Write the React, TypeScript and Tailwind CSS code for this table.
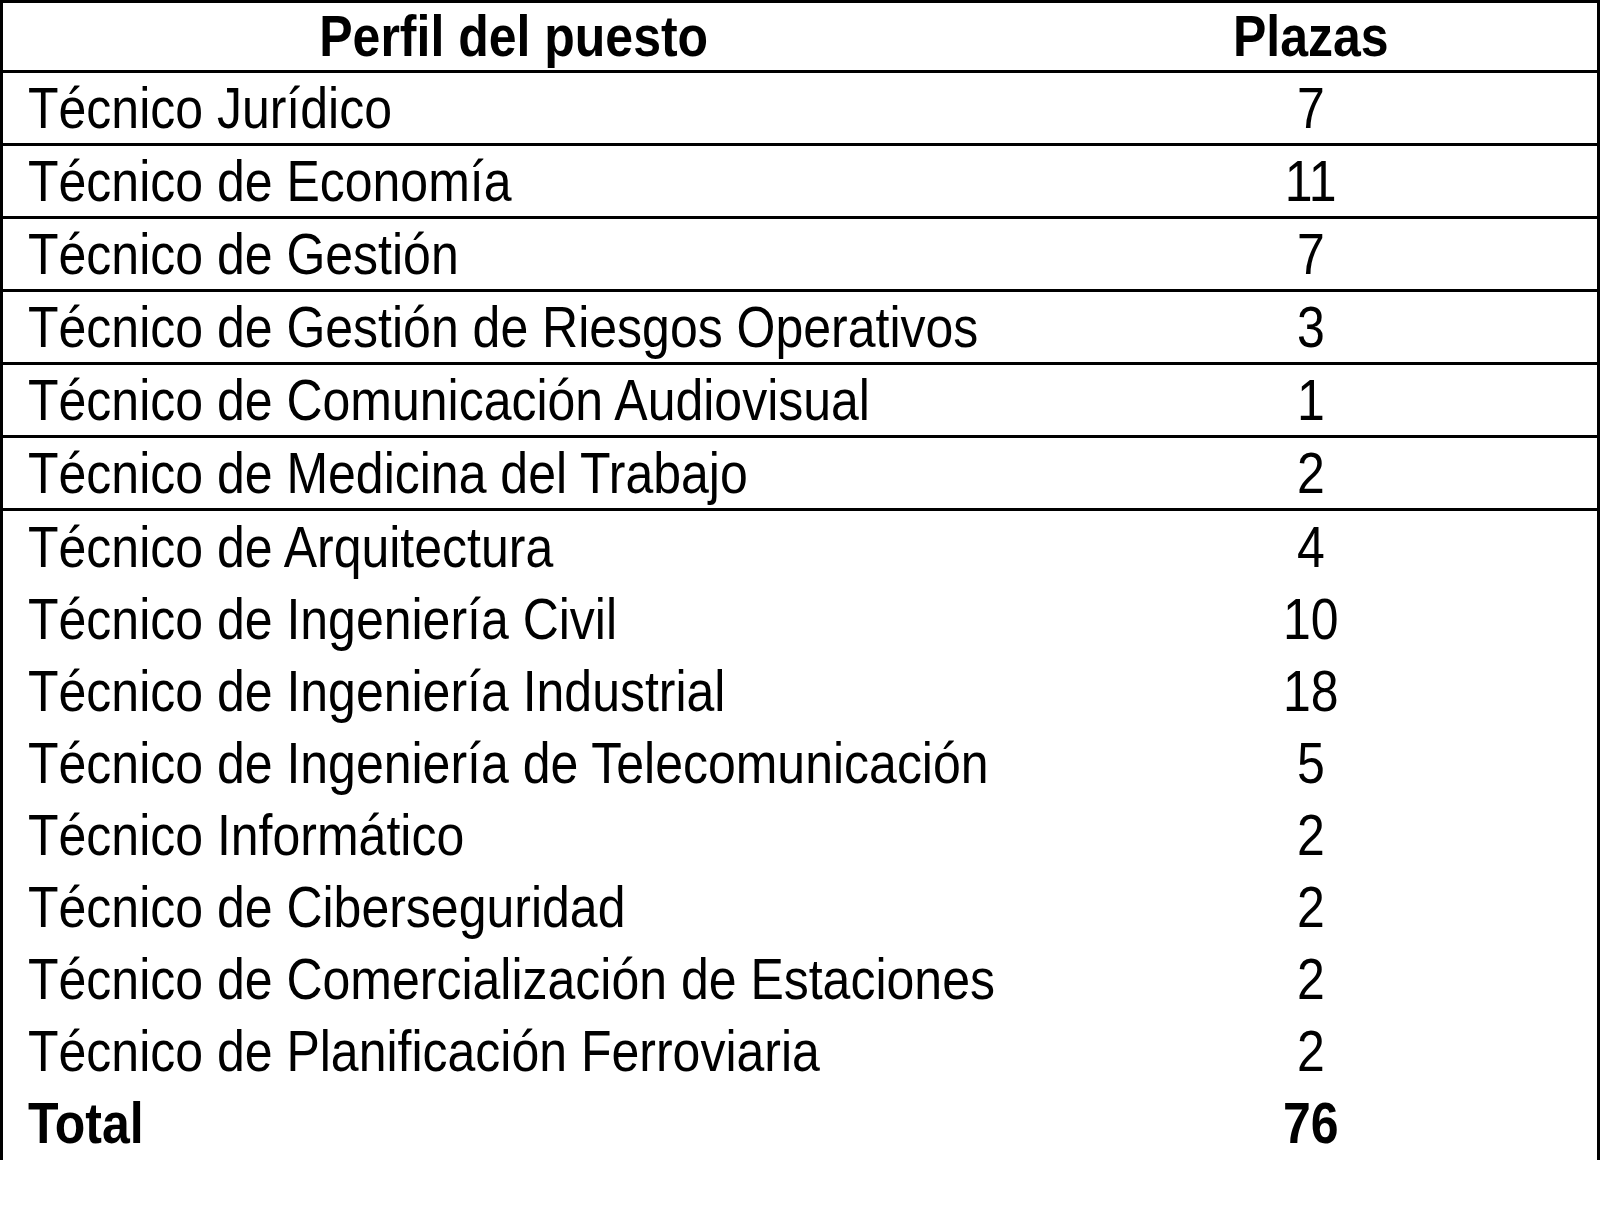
import React from "react";

const bordered: [string, string][] = [
  ["Técnico Jurídico", "7"],
  ["Técnico de Economía", "11"],
  ["Técnico de Gestión", "7"],
  ["Técnico de Gestión de Riesgos Operativos", "3"],
  ["Técnico de Comunicación Audiovisual", "1"],
  ["Técnico de Medicina del Trabajo", "2"],
];

const plain: [string, string][] = [
  ["Técnico de Arquitectura", "4"],
  ["Técnico de Ingeniería Civil", "10"],
  ["Técnico de Ingeniería Industrial", "18"],
  ["Técnico de Ingeniería de Telecomunicación", "5"],
  ["Técnico Informático", "2"],
  ["Técnico de Ciberseguridad", "2"],
  ["Técnico de Comercialización de Estaciones", "2"],
  ["Técnico de Planificación Ferroviaria", "2"],
];

function Name({ children }: { children: React.ReactNode }) {
  return (
    <div className="pl-[25px] whitespace-nowrap">
      <span className="inline-block origin-left scale-x-[0.877]">{children}</span>
    </div>
  );
}

function Num({ children }: { children: React.ReactNode }) {
  return (
    <div className="flex justify-center whitespace-nowrap">
      <span className="inline-block origin-center scale-x-[0.877]">{children}</span>
    </div>
  );
}

export default function App() {
  return (
    <div className="w-[1600px] h-[1232px] bg-white text-black font-['Liberation_Sans','Arial',sans-serif]">
      <div className="w-[1600px] h-[1160px] border-l-[3px] border-r-[3px] border-t-[3px] border-black">
        <div className="grid grid-cols-[1022px_1fr] h-[70px] border-b-[3px] border-black font-bold text-[57px] leading-[67px]">
          <Num>Perfil del puesto</Num>
          <Num>Plazas</Num>
        </div>
        {bordered.map(([name, n]) => (
          <div
            key={name}
            className="grid grid-cols-[1022px_1fr] h-[73px] border-b-[3px] border-black text-[57px] leading-[70px]"
          >
            <Name>{name}</Name>
            <Num>{n}</Num>
          </div>
        ))}
        {plain.map(([name, n]) => (
          <div key={name} className="grid grid-cols-[1022px_1fr] h-[72px] text-[57px] leading-[72px]">
            <Name>{name}</Name>
            <Num>{n}</Num>
          </div>
        ))}
        <div className="grid grid-cols-[1022px_1fr] h-[72px] text-[57px] leading-[72px] font-bold">
          <Name>Total</Name>
          <Num>76</Num>
        </div>
      </div>
    </div>
  );
}
